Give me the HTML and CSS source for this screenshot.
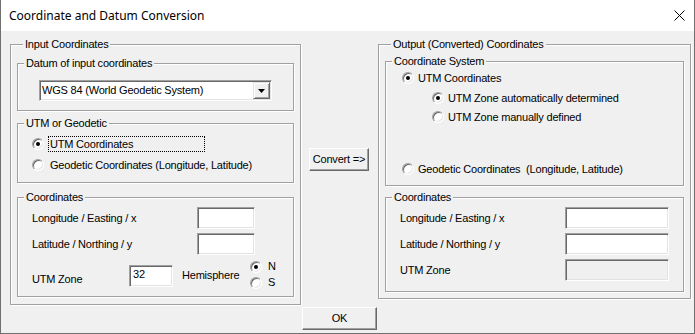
FILE: index.html
```html
<!DOCTYPE html>
<html lang="en">
<head>
    <meta charset="UTF-8">
    <title>Coordinate and Datum Conversion</title>
    <link rel="stylesheet" href="styles.css">
</head>
<body>
    <div class="window">
        <div class="titlebar">
            <span class="title">Coordinate and Datum Conversion</span>
            <svg class="close" width="11" height="11" viewBox="0 0 11 11">
                <path d="M0.5 0.5L10.5 10.5M10.5 0.5L0.5 10.5" stroke="#000" stroke-width="1"/>
            </svg>
        </div>

        <div class="client">
            <!-- Eingabe -->
            <div class="group group-input">
                <div class="legend">Input Coordinates</div>

                <div class="group group-datum">
                    <div class="legend">Datum of input coordinates</div>
                    <div class="combo">
                        <span class="combo-text">WGS 84 (World Geodetic System)</span>
                        <span class="combo-btn">
                            <svg width="7" height="4" viewBox="0 0 7 4"><polygon points="0,0 7,0 3.5,4" fill="#000"/></svg>
                        </span>
                    </div>
                </div>

                <div class="group group-utm">
                    <div class="legend">UTM or Geodetic</div>
                    <div class="radio-row utm-first">
                        <span class="radio checked"></span>
                        <span class="focus-label has-focus">UTM Coordinates</span>
                    </div>
                    <div class="radio-row utm-second">
                        <span class="radio"></span>
                        <span class="focus-label">Geodetic Coordinates (Longitude, Latitude)</span>
                    </div>
                </div>

                <div class="group group-coords-in">
                    <div class="legend">Coordinates</div>
                    <div class="field-row first">
                        <span class="field-label">Longitude / Easting / x</span>
                        <span class="edit edit-short"></span>
                    </div>
                    <div class="field-row">
                        <span class="field-label">Latitude / Northing / y</span>
                        <span class="edit edit-short"></span>
                    </div>
                    <div class="field-row zone-row">
                        <span class="zone-label">UTM Zone</span>
                        <span class="edit edit-zone">32</span>
                        <span class="hemi-label">Hemisphere</span>
                        <div class="hemi">
                            <div class="hemi-opt"><span class="radio checked"></span><span>N</span></div>
                            <div class="hemi-opt"><span class="radio"></span><span>S</span></div>
                        </div>
                    </div>
                </div>
            </div>

            <div class="middle">
                <div class="button convert-btn">Convert =&gt;</div>
            </div>

            <!-- Ausgabe -->
            <div class="group group-output">
                <div class="legend">Output (Converted) Coordinates</div>

                <div class="group group-system">
                    <div class="legend">Coordinate System</div>
                    <div class="opt-row r1">
                        <span class="radio checked"></span>
                        <span class="opt-label">UTM Coordinates</span>
                    </div>
                    <div class="opt-row r2 sub">
                        <span class="radio checked"></span>
                        <span class="opt-label">UTM Zone automatically determined</span>
                    </div>
                    <div class="opt-row r3 sub">
                        <span class="radio"></span>
                        <span class="opt-label">UTM Zone manually defined</span>
                    </div>
                    <div class="opt-row r4">
                        <span class="radio"></span>
                        <span class="opt-label">Geodetic Coordinates &nbsp;(Longitude, Latitude)</span>
                    </div>
                </div>

                <div class="group group-coords-out">
                    <div class="legend">Coordinates</div>
                    <div class="field-row first">
                        <span class="field-label">Longitude / Easting / x</span>
                        <span class="edit edit-long"></span>
                    </div>
                    <div class="field-row">
                        <span class="field-label">Latitude / Northing / y</span>
                        <span class="edit edit-long"></span>
                    </div>
                    <div class="field-row">
                        <span class="field-label">UTM Zone</span>
                        <span class="edit edit-long disabled"></span>
                    </div>
                </div>
            </div>

            <div class="footer">
                <div class="button ok-btn">OK</div>
            </div>
        </div>
    </div>
</body>
</html>
```

FILE: styles.css
```css
* {
    margin: 0;
    padding: 0;
    box-sizing: border-box;
}

body {
    background: #fff;
    font-family: "Liberation Sans", Arial, sans-serif;
    font-size: 11px;
    letter-spacing: -0.2px;
    line-height: 13px;
    color: #000;
}

.window {
    width: 695px;
    height: 334px;
    border: 1px solid #707070;
    border-top: none;
    background: #f0f0f0;
    display: flex;
    flex-direction: column;
}

.titlebar {
    height: 31px;
    flex: none;
    background: #fff;
    display: flex;
    align-items: center;
    justify-content: space-between;
    padding: 0 9px 0 8px;
}

.title {
    font-family: "Noto Sans", "Open Sans", sans-serif;
    font-size: 12px;
    letter-spacing: 0;
}

.client {
    flex: 1;
    padding: 13px 0 0 9px;
    display: grid;
    grid-template-columns: 291px 77px 313px;
    grid-template-rows: 261px auto;
    row-gap: 2px;
}

/* Gruppenrahmen */
.group {
    border: 1px solid #a0a0a0;
    box-shadow: inset 1px 1px 0 #fff, 1px 1px 0 #fff;
}

.legend {
    width: fit-content;
    margin: -7px 0 0 6px;
    padding: 0 2px;
    background: #f0f0f0;
    white-space: nowrap;
}

.group-input {
    height: 261px;
    padding: 0 6px;
}

.group-datum {
    margin-top: 12px;
    height: 48px;
}

.group-utm {
    margin-top: 12px;
    height: 60px;
}

.group-coords-in {
    margin-top: 14px;
    height: 100px;
}

.group-output {
    height: 255px;
    padding: 0 6px;
}

.group-system {
    margin-top: 10px;
    height: 125px;
}

.group-coords-out {
    margin-top: 11px;
    height: 95px;
}

/* Combobox */
.combo {
    margin: 10px 0 0 21px;
    width: 233px;
    height: 21px;
    background: #fff;
    border: 1px solid;
    border-color: #a0a0a0 #fff #fff #a0a0a0;
    box-shadow: inset 1px 1px 0 #696969, inset -1px -1px 0 #e3e3e3;
    padding: 1px;
    display: flex;
    align-items: center;
    justify-content: space-between;
}

.combo-text {
    padding-left: 1px;
}

.combo-btn {
    width: 17px;
    height: 17px;
    background: #f0f0f0;
    border: 1px solid;
    border-color: #e3e3e3 #696969 #696969 #e3e3e3;
    box-shadow: inset 1px 1px 0 #fff, inset -1px -1px 0 #a0a0a0;
    display: flex;
    align-items: center;
    justify-content: center;
}

.combo-btn svg {
    display: block;
}

/* Radiobuttons */
.radio {
    flex: none;
    width: 12px;
    height: 12px;
    border-radius: 50%;
    background: #fff;
    border: 1px solid;
    border-color: #a0a0a0 #fff #fff #a0a0a0;
    box-shadow: inset 1px 1px 0 #696969, inset -1px -1px 0 #e3e3e3;
    display: flex;
    align-items: center;
    justify-content: center;
}

.radio.checked::after {
    content: "";
    width: 4px;
    height: 4px;
    border-radius: 50%;
    background: #000;
}

.radio-row {
    display: flex;
    align-items: center;
    height: 16px;
    padding-left: 14px;
}

.utm-first {
    margin-top: 6px;
}

.utm-second {
    margin-top: 5px;
}

.focus-label {
    margin-left: 4px;
    width: 157px;
    height: 16px;
    line-height: 14px;
    padding: 0 1px;
    border: 1px dotted transparent;
    white-space: nowrap;
}

.focus-label.has-focus {
    border-color: #000;
}

.opt-row {
    display: flex;
    align-items: center;
    height: 16px;
    padding-left: 16px;
}

.opt-row.sub {
    padding-left: 46px;
}

.opt-row.r1 { margin-top: 2px; }
.opt-row.r2 { margin-top: 4px; }
.opt-row.r3 { margin-top: 3px; }
.opt-row.r4 { margin-top: 36px; }

.opt-label {
    margin-left: 4px;
    white-space: pre;
}

/* Eingabefelder */
.field-row {
    display: flex;
    align-items: center;
    height: 22px;
    margin-top: 4px;
}

.field-row.first {
    margin-top: 3px;
}

.field-label {
    width: 179px;
    padding-left: 14px;
}

.edit {
    height: 22px;
    background: #fff;
    border: 1px solid;
    border-color: #a0a0a0 #fff #fff #a0a0a0;
    box-shadow: inset 1px 1px 0 #696969, inset -1px -1px 0 #e3e3e3;
}

.edit.disabled {
    background: #f0f0f0;
}

.edit-short {
    width: 58px;
}

.edit-long {
    width: 104px;
}

.zone-row {
    margin-top: 10px;
    align-items: flex-start;
}

.zone-label {
    width: 111px;
    padding-left: 14px;
    margin-top: 8px;
}

.edit-zone {
    width: 44px;
    padding: 2px 0 0 3px;
}

.hemi-label {
    width: 68px;
    margin: 4px 0 0 9px;
}

.hemi {
    margin-top: -5px;
    display: flex;
    flex-direction: column;
    gap: 3px;
}

.hemi-opt {
    display: flex;
    align-items: center;
    gap: 6px;
    height: 13px;
}

/* Schaltflaechen */
.button {
    height: 23px;
    background: #f0f0f0;
    border: 1px solid;
    border-color: #fff #696969 #696969 #fff;
    box-shadow: inset -1px -1px 0 #a0a0a0;
    display: flex;
    align-items: center;
    justify-content: center;
}

.convert-btn {
    margin: 104px 0 0 8px;
    width: 60px;
}

.footer {
    grid-column: 2;
}

.ok-btn {
    margin-left: 1px;
    width: 75px;
}
```
